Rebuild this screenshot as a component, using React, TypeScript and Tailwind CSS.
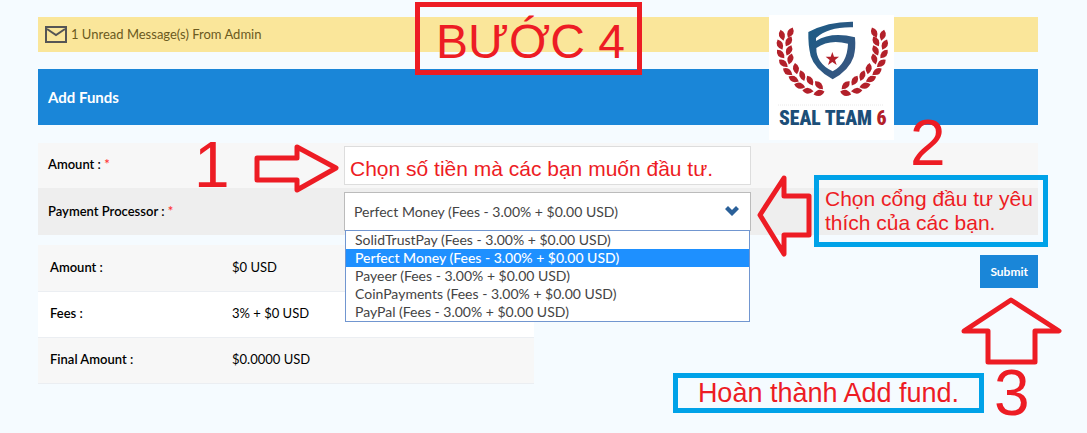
import { useState } from 'react'

const PROCESSORS = ['SolidTrustPay', 'Perfect Money', 'Payeer', 'CoinPayments', 'PayPal']

const SUMMARY = [
  { label: 'Amount :', value: '$0 USD' },
  { label: 'Fees :', value: '3% + $0 USD' },
  { label: 'Final Amount :', value: '$0.0000 USD' },
]

const withFees = (name: string) => `${name} (Fees - 3.00% + $0.00 USD)`

// One branch of the laurel: x, y, rotation of every leaf
const LEAVES = [
  [91, 68, 115], [66, 76, 75], [86, 94, 120], [60, 104, 65], [87, 121, 115], [62, 132, 50],
  [91, 147, 105], [70, 160, 40], [108, 176, 80], [83, 185, 35], [127, 197, 70], [101, 207, 25],
  [150, 212, 60], [119, 227, 15], [177, 226, 45], [144, 242, 5], [177, 249, 165],
]

function Laurel() {
  return (
    <g fill="#b3202a">
      {LEAVES.map(([x, y, r]) => (
        <path key={`${x}-${y}`} d="M-17 0 Q-2 -18 17 0 Q-2 18 -17 0 Z" transform={`translate(${x} ${y}) rotate(${r})`} />
      ))}
    </g>
  )
}

function Logo() {
  return (
    <svg viewBox="27 15 375 375" className="block size-[125px]" role="img" aria-label="Seal Team 6">
      <defs>
        <linearGradient id="shield" x1="0" y1="0" x2="1" y2="1">
          <stop offset="0" stopColor="#1b5c86" />
          <stop offset="1" stopColor="#3c5580" />
        </linearGradient>
      </defs>
      <rect x="27" y="15" width="375" height="375" fill="#fff" />
      <Laurel />
      <g transform="translate(434 0) scale(-1 1)">
        <Laurel />
      </g>
      <path
        d="M145 66 Q205 34 279 35 V52 Q205 50 168 84 V93 Q215 64 285 82 Q288 115 281 140 Q268 180 218 208 Q164 178 152 138 Q144 105 145 66 Z M169 114 Q168 160 218 184 Q262 160 264 101 Q208 86 169 114 Z"
        fill="url(#shield)"
        fillRule="evenodd"
      />
      <path d="M217 126 L222 140 H237 L225 150 L230 165 L217 156 L204 165 L209 150 L197 140 H212 Z" fill="#b3202a" />
      <path d="M54 285 H372" stroke="#ddd" strokeWidth="2" strokeDasharray="3 3" />
      <text x="57" y="344" fontFamily="Roboto Condensed, Roboto, sans-serif" fontWeight="900" fontSize="59" fill="#1c4e78">
        SEAL TEAM <tspan fill="#b3202a">6</tspan>
      </text>
    </svg>
  )
}

function Arrow({ points, className }: { points: string; className: string }) {
  return (
    <svg className={`shrink-0 ${className}`} fill="none" stroke="#ed1c24" strokeWidth="5" strokeLinejoin="round" aria-hidden="true">
      <polygon points={points} />
    </svg>
  )
}

export default function App() {
  const [processor, setProcessor] = useState('Perfect Money')

  return (
    <div className="relative min-h-screen bg-[#f5fbff] pt-[17px] pr-[49px] pb-12 pl-[38px] font-['Lato',sans-serif] text-[13px] text-black">
      <div className="flex h-[35px] items-center gap-1 bg-[#fae69a] pl-[7px] text-[#6b5a1e]">
        <svg width="22" height="17" viewBox="0 0 22 17" fill="none" stroke="#555" strokeWidth="2" aria-hidden="true">
          <rect x="1" y="1" width="20" height="15" />
          <path d="M2 3 L11 9 L20 3" />
        </svg>
        <span>1 Unread Message(s) From Admin</span>
      </div>

      <h1 className="mt-[17px] flex h-14 items-center bg-[#1a86d8] pl-2.5 text-[15px] font-bold text-white">Add Funds</h1>

      <form className="mt-[18px]" onSubmit={(e) => e.preventDefault()}>
        <div className="flex h-[45px] items-center bg-[#f7f7f7] pl-2.5">
          <label htmlFor="amount" className="w-[296px] pb-0.5 font-semibold">
            Amount : <span className="text-[#f33]">*</span>
          </label>
          <input id="amount" type="text" className="h-[39px] w-[407px] border border-[#ddd] bg-white px-2.5" />
        </div>
        <div className="flex h-[47px] items-center bg-[#eee] pl-2.5">
          <label htmlFor="processor" className="w-[296px] font-semibold">
            Payment Processor : <span className="text-[#f33]">*</span>
          </label>
          <div className="relative w-[407px] text-sm">
            <select
              id="processor"
              value={processor}
              onChange={(e) => setProcessor(e.target.value)}
              className="block h-[39px] w-full appearance-none border border-[#bbb] bg-white px-[9px] text-[#444]"
            >
              {PROCESSORS.map((name) => (
                <option key={name} value={name}>{withFees(name)}</option>
              ))}
            </select>
            <svg className="absolute top-3.5 right-3 h-[10px] w-[14px]" viewBox="0 0 14 10" aria-hidden="true">
              <path d="M3 0 L7 4 L11 0 L14 3 L7 10 L0 3 Z" fill="#2a6099" />
            </svg>
            <ul className="absolute top-[38px] right-px left-px z-10 border border-[#7196d0] bg-white text-[#444]">
              {PROCESSORS.map((name) => (
                <li
                  key={name}
                  className={name === processor ? 'h-[18px] bg-[#1e90ff] px-[9px] leading-[18px] font-medium text-white' : 'h-[18px] px-[9px] leading-[18px]'}
                >
                  {withFees(name)}
                </li>
              ))}
            </ul>
          </div>
        </div>

        <div className="mt-2.5 flex items-start justify-between">
          <table className="w-[496px]">
            <tbody>
              {SUMMARY.map((row) => (
                <tr key={row.label} className="h-[46px] border-b border-[#ebeef2] bg-[#f7f7f7] even:bg-white">
                  <th scope="row" className="w-[182px] pl-3 text-left font-semibold">{row.label}</th>
                  <td className="pl-3">{row.value}</td>
                </tr>
              ))}
            </tbody>
          </table>
          <button type="submit" className="mt-2.5 h-[33px] bg-[#1a86d8] px-2.5 text-xs font-bold text-white">Submit</button>
        </div>
      </form>

      {/* Guide notes drawn over the form */}
      <div className="pointer-events-none absolute inset-0 z-20 font-['Liberation_Sans',Arial,sans-serif] text-[#ed1c24]">
        <div className="absolute top-[15px] left-[769px]">
          <Logo />
        </div>
        <div className="absolute top-[2px] left-[415px] flex h-[73px] w-[227px] items-center justify-center border-5 border-[#ed1c24] pt-1.5 pl-1 text-[48px]">
          BƯỚC 4
        </div>

        {/* Step 1 */}
        <div className="absolute top-[133px] left-[194px] flex items-center">
          <span className="w-[60px] pb-2 text-[64px] leading-16">1</span>
          <Arrow className="h-[52px] w-[88px]" points="3,15 43,15 43,4 82,25 43,47 43,37 3,37" />
          <span className="pl-2 text-[21px] leading-6 whitespace-nowrap">Chọn số tiền mà các bạn muốn đầu tư.</span>
        </div>

        {/* Step 2 */}
        <div className="absolute top-[111px] left-[755px]">
          <div className="pl-[155px] text-[64px] leading-16">2</div>
          <div className="flex items-start">
            <Arrow className="h-[83px] w-[59px]" points="54,21 29,21 29,3 5,40 29,79 29,60 54,60" />
            <p className="h-[72px] w-[234px] border-5 border-[#00a2e8] px-1.5 pt-[7px] text-[21px] leading-6 whitespace-nowrap">
              Chọn cổng đầu tư yêu
              <br />
              thích của các bạn.
            </p>
          </div>
        </div>

        {/* Step 3 */}
        <div className="absolute top-[296px] left-[673px]">
          <Arrow className="ml-[287px] block h-[69px] w-[104px]" points="51,4 99,35 75,35 75,66 28,66 28,35 4,35" />
          <div className="flex items-center gap-2.5">
            <div className="flex h-[40px] w-[311px] items-center justify-center border-5 border-[#00a2e8] text-[27px] whitespace-nowrap">
              Hoàn thành Add fund.
            </div>
            <span className="text-[64px] leading-14">3</span>
          </div>
        </div>
      </div>
    </div>
  )
}
